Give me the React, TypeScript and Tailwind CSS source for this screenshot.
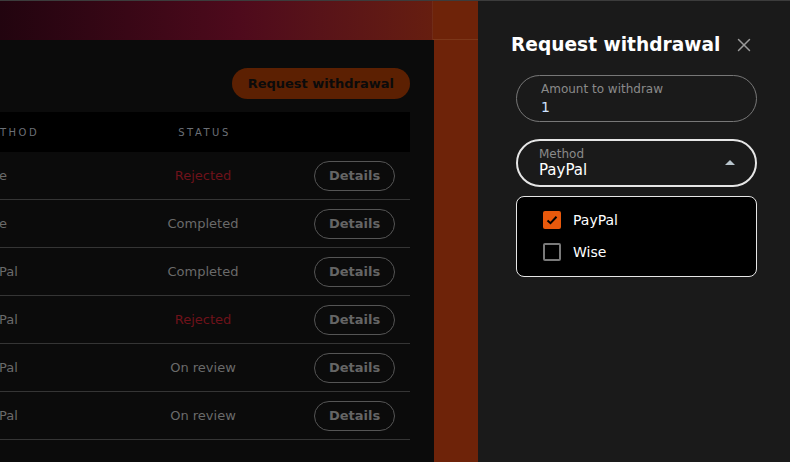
import { X } from "lucide-react";

const rows = [
  { method: "Wise", status: "Rejected" },
  { method: "Wise", status: "Completed" },
  { method: "PayPal", status: "Completed" },
  { method: "PayPal", status: "Rejected" },
  { method: "PayPal", status: "On review" },
  { method: "PayPal", status: "On review" },
];

const font = { fontFamily: '"DejaVu Sans", "Noto Sans", sans-serif' };

export default function App() {
  return (
    <div
      className="flex h-[462px] w-[790px] overflow-hidden border-t border-[#3c3c3c] bg-[#1a1a1a]"
      style={font}
    >
      <div className="flex w-[478px] shrink-0 flex-col overflow-hidden bg-gradient-to-r from-[#22040f] via-[#4e0a1c] to-[#6c2209]">
        <div className="flex h-[39px] shrink-0">
          <div className="w-[433px] border-r border-[#7a3a22]/50" />
          <div className="flex-1 border-b border-[#8a4a2a]/50 bg-[#6e2309]" />
        </div>
        <div className="flex flex-1">
          <div className="flex w-[434px] flex-col bg-[#0b0b0b] pr-[24px]">
            <div className="flex justify-end pt-[28px] pb-[13px]">
              <button className="h-[31px] rounded-full bg-[#5c2002] px-[16px] text-[13px] font-bold text-[#0b0b0b]">
                Request withdrawal
              </button>
            </div>
            <div className="flex h-[40px] items-center bg-black text-[10px] tracking-[0.25em] text-[#6b6f76]">
              <div className="ml-[-20px] w-[170px] shrink-0">METHOD</div>
              <div className="w-[106px] shrink-0 pl-[3px] text-center">STATUS</div>
            </div>
            {rows.map((r, i) => (
              <div
                key={i}
                className="flex h-[48px] items-center border-b border-[#353535] text-[13px] text-[#6a6a6a]"
              >
                <div className="ml-[-24px] w-[174px] shrink-0">{r.method}</div>
                <div
                  className={
                    r.status === "Rejected"
                      ? "w-[106px] shrink-0 text-center text-[#6e121a]"
                      : "w-[106px] shrink-0 text-center"
                  }
                >
                  {r.status}
                </div>
                <div className="flex flex-1 justify-end pr-[15px]">
                  <button className="h-[30px] w-[81px] rounded-full border border-[#555] text-[13px] font-bold text-[#656565]">
                    Details
                  </button>
                </div>
              </div>
            ))}
          </div>
          <div className="flex-1 bg-[#6e2309]" />
        </div>
      </div>

      <div className="flex flex-1 flex-col px-[33px] pt-[30px]">
        <div className="flex items-center justify-between pr-[2px]">
          <h2 className="text-[18.6px] font-bold text-white">Request withdrawal</h2>
          <X className="h-[22px] w-[22px] text-[#9a9a9a]" strokeWidth={1.6} />
        </div>
        <div className="ml-[5px] mt-[16px] flex h-[47px] w-[241px] flex-col justify-center gap-[2px] rounded-full border border-[#777] px-[24px] pt-[2px]">
          <span className="text-[12px] leading-[14px] text-[#8a8a8a]">Amount to withdraw</span>
          <span className="text-[14px] leading-[18px] text-[#cfe3ff]">1</span>
        </div>
        <div className="ml-[5px] mt-[17px] flex h-[48px] w-[241px] items-center rounded-full border-2 border-[#e6e6e6] pl-[21px] pr-[20px]">
          <div className="flex flex-1 flex-col">
            <span className="text-[12px] leading-[14px] text-[#8a8a8a]">Method</span>
            <span className="text-[15px] leading-[18px] text-white">PayPal</span>
          </div>
          <svg width="10" height="6" viewBox="0 0 10 6">
            <path d="M5 0 L10 5 H0 Z" fill="#b8c4cc" />
          </svg>
        </div>
        <div className="ml-[5px] mt-[9px] flex h-[81px] w-[241px] flex-col justify-center gap-[14px] rounded-[8px] border border-[#e6e6e6] bg-black pl-[26px]">
          <label className="flex items-center gap-[12px] text-[14px] leading-[18px] text-white">
            <span className="flex h-[18px] w-[18px] items-center justify-center rounded-[2px] bg-[#e8590c]">
              <svg width="12" height="10" viewBox="0 0 12 10">
                <path d="M1.5 5.5 L4.5 8.2 L10.5 1.8" stroke="#000" strokeWidth="2" fill="none" />
              </svg>
            </span>
            PayPal
          </label>
          <label className="flex items-center gap-[12px] text-[14px] leading-[18px] text-white">
            <span className="h-[18px] w-[18px] rounded-[2px] border-2 border-[#7a7a7a]" />
            Wise
          </label>
        </div>
      </div>
    </div>
  );
}
